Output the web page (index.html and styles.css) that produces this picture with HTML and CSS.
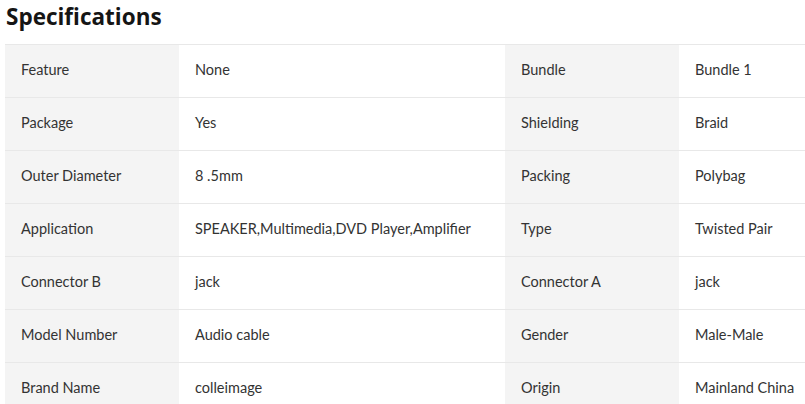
FILE: index.html
```html
<!DOCTYPE html>
<html>
<head>
<meta charset="utf-8">
<link rel="stylesheet" href="styles.css">
</head>
<body>
<div class="specs">
  <h2 class="title">Specifications</h2>
  <div class="table">
    <div class="row"><div class="k">Feature</div><div class="v">None</div><div class="k">Bundle</div><div class="v">Bundle 1</div></div>
    <div class="row"><div class="k">Package</div><div class="v">Yes</div><div class="k">Shielding</div><div class="v">Braid</div></div>
    <div class="row"><div class="k">Outer Diameter</div><div class="v">8 .5mm</div><div class="k">Packing</div><div class="v">Polybag</div></div>
    <div class="row"><div class="k">Application</div><div class="v">SPEAKER,Multimedia,DVD Player,Amplifier</div><div class="k">Type</div><div class="v">Twisted Pair</div></div>
    <div class="row"><div class="k">Connector B</div><div class="v">jack</div><div class="k">Connector A</div><div class="v">jack</div></div>
    <div class="row"><div class="k">Model Number</div><div class="v">Audio cable</div><div class="k">Gender</div><div class="v">Male-Male</div></div>
    <div class="row"><div class="k">Brand Name</div><div class="v">colleimage</div><div class="k">Origin</div><div class="v">Mainland China</div></div>
  </div>
</div>
</body>
</html>
```

FILE: styles.css
```css
html, body {
  margin: 0;
  padding: 0;
  background: #fff;
}
body {
  font-family: "Lato", "Open Sans", sans-serif;
  color: #222;
  overflow: hidden;
}
.specs {
  padding: 0 0 0 5px;
  overflow: hidden;
}
.title {
  margin: 0;
  padding: 2px 0 0 1px;
  height: 44px;
  box-sizing: border-box;
  font-family: "Open Sans", sans-serif;
  font-weight: 700;
  font-size: 22.5px;
  line-height: 30px;
  color: #151515;
}
.table {
  width: 800px;
  border-top: 1px solid #e8e8e8;
}
.row {
  display: grid;
  grid-template-columns: 174px 326px 174px 1fr;
  height: 53px;
  border-bottom: 1px solid #e8e8e8;
  box-sizing: border-box;
}
.k, .v {
  display: flex;
  align-items: center;
  padding-left: 16px;
  padding-bottom: 3px;
  font-size: 14.5px;
  color: #333;
  white-space: nowrap;
  overflow: hidden;
}
.k {
  background: #f4f4f4;
}
.v {
  background: #fff;
}
```
